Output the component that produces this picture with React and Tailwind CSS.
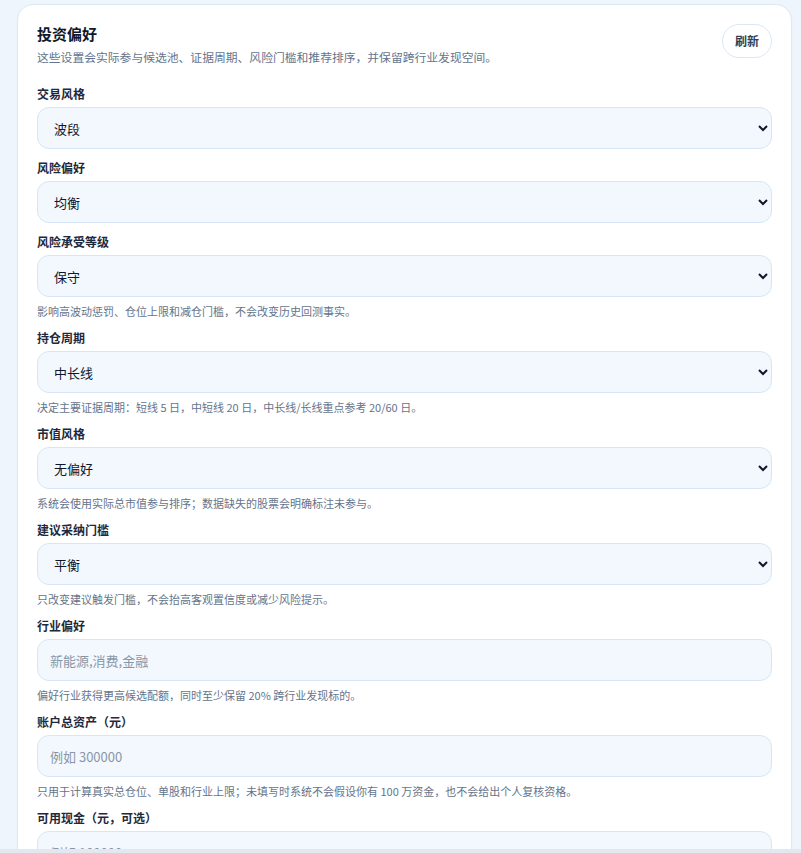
import React from "react";

const font = { fontFamily: '"Noto Sans CJK SC", "Noto Sans", sans-serif' };

function Field({ label, helper, children }) {
  return (
    <div className="flex flex-col">
      <div className="text-[12px] leading-[18px] font-semibold text-[#1e293b]">{label}</div>
      <div className="mt-[4px]">{children}</div>
      {helper && (
        <div className="mt-[6px] text-[11px] leading-[16px] text-[#64748b]">{helper}</div>
      )}
    </div>
  );
}

function Select({ value, options }) {
  return (
    <select
      defaultValue={value}
      className="w-full h-[42px] rounded-[12px] border border-[#d6e6f6] bg-[#f2f8fe] px-3 text-[13px] text-[#0f172a] outline-none"
    >
      {options.map((o) => (
        <option key={o} value={o}>{o}</option>
      ))}
    </select>
  );
}

function Input({ placeholder }) {
  return (
    <input
      placeholder={placeholder}
      className="w-full h-[42px] rounded-[12px] border border-[#d6e6f6] bg-[#f2f8fe] px-3 text-[13px] text-[#0f172a] placeholder:text-[#8a96a6] outline-none"
    />
  );
}

export default function App() {
  return (
    <div style={font} className="h-[853px] flex flex-col overflow-hidden bg-[#eff5fc]">
      <div className="flex-1 overflow-hidden pt-[4px] pl-[17px] pr-[9px]">
        <div className="rounded-[16px] border border-[#dde9f6] bg-white px-[19px] pt-[18px] pb-6 shadow-[0_1px_3px_rgba(15,23,42,0.03)]">
          <div className="flex items-start justify-between">
            <div className="flex flex-col">
              <div className="text-[15px] leading-[22px] font-bold text-[#0f172a]">投资偏好</div>
              <div className="mt-[4px] text-[11.8px] leading-[16px] text-[#64748b]">
                这些设置会实际参与候选池、证据周期、风险门槛和推荐排序，并保留跨行业发现空间。
              </div>
            </div>
            <button className="mt-[1px] h-[34px] w-[50px] rounded-full border border-[#dbe8f5] bg-white text-[12px] font-semibold text-[#334155]">
              刷新
            </button>
          </div>

          <div className="mt-[20px] flex flex-col gap-[10px]">
            <Field label="交易风格">
              <Select value="波段" options={["短线", "波段", "中长线"]} />
            </Field>
            <Field label="风险偏好">
              <Select value="均衡" options={["保守", "均衡", "进取"]} />
            </Field>
            <Field label="风险承受等级" helper="影响高波动惩罚、仓位上限和减仓门槛，不会改变历史回测事实。">
              <Select value="保守" options={["保守", "稳健", "积极"]} />
            </Field>
            <Field label="持仓周期" helper="决定主要证据周期：短线 5 日，中短线 20 日，中长线/长线重点参考 20/60 日。">
              <Select value="中长线" options={["短线", "中短线", "中长线", "长线"]} />
            </Field>
            <Field label="市值风格" helper="系统会使用实际总市值参与排序；数据缺失的股票会明确标注未参与。">
              <Select value="无偏好" options={["无偏好", "大盘", "中盘", "小盘"]} />
            </Field>
            <Field label="建议采纳门槛" helper="只改变建议触发门槛，不会抬高客观置信度或减少风险提示。">
              <Select value="平衡" options={["宽松", "平衡", "严格"]} />
            </Field>
            <Field label="行业偏好" helper="偏好行业获得更高候选配额，同时至少保留 20% 跨行业发现标的。">
              <Input placeholder="新能源,消费,金融" />
            </Field>
            <Field label="账户总资产（元）" helper="只用于计算真实总仓位、单股和行业上限；未填写时系统不会假设你有 100 万资金，也不会给出个人复核资格。">
              <Input placeholder="例如 300000" />
            </Field>
            <Field label="可用现金（元，可选）">
              <Input placeholder="例如 100000" />
            </Field>
          </div>
        </div>
      </div>
      <div className="h-[4px] bg-[#e2e8f0]" />
    </div>
  );
}
